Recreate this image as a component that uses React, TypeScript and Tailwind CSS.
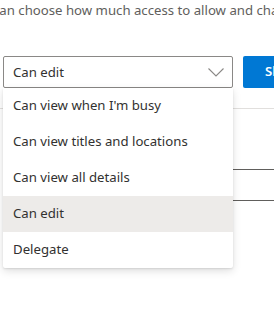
import React from "react";

const items = [
  "Can view when I'm busy",
  "Can view titles and locations",
  "Can view all details",
  "Can edit",
  "Delegate",
];

export default function App() {
  return (
    <div
      className="relative w-[274px] h-[330px] overflow-hidden bg-white text-[13.2px] text-[#323130]"
      style={{ fontFamily: '"Noto Sans", "Open Sans", sans-serif' }}
    >
      <p className="whitespace-nowrap ml-[-7px] leading-[20px] text-[#605e5c]">
        can choose how much access to allow and change it
      </p>

      <div className="mt-[36px] flex items-center pl-[3px]">
        <div className="flex h-[32px] w-[230px] shrink-0 items-center justify-between rounded-[2px] border border-[#8a8886] pl-[9px] pr-[8px]">
          <span className="leading-[20px]">Can edit</span>
          <svg width="16" height="9" viewBox="0 0 16 9" fill="none">
            <path d="M0.5 0.5 L8 8 L15.5 0.5" stroke="#8a8886" strokeWidth="1.1" />
          </svg>
        </div>
        <div className="ml-[10px] flex h-[32px] shrink-0 items-center rounded-[2px] bg-[#0078d4] pl-[22px] pr-[20px] font-semibold text-white">
          Share
        </div>
      </div>

      <div className="mt-[20px] h-px bg-[#e1dfdd]" />
      <div className="ml-[150px] mt-[60px] h-px bg-[#605e5c]" />
      <div className="ml-[150px] mt-[30px] h-px bg-[#605e5c]" />

      <div className="absolute left-[3px] top-[88px] w-[230px] rounded-b-[2px] bg-white shadow-[0_3px_8px_rgba(0,0,0,0.13),0_1px_2px_rgba(0,0,0,0.1)]">
        {items.map((it) => (
          <div
            key={it}
            className={`flex h-[36px] items-center pl-[10px] ${
              it === "Can edit" ? "bg-[#edebe9]" : ""
            }`}
          >
            {it}
          </div>
        ))}
      </div>
    </div>
  );
}
